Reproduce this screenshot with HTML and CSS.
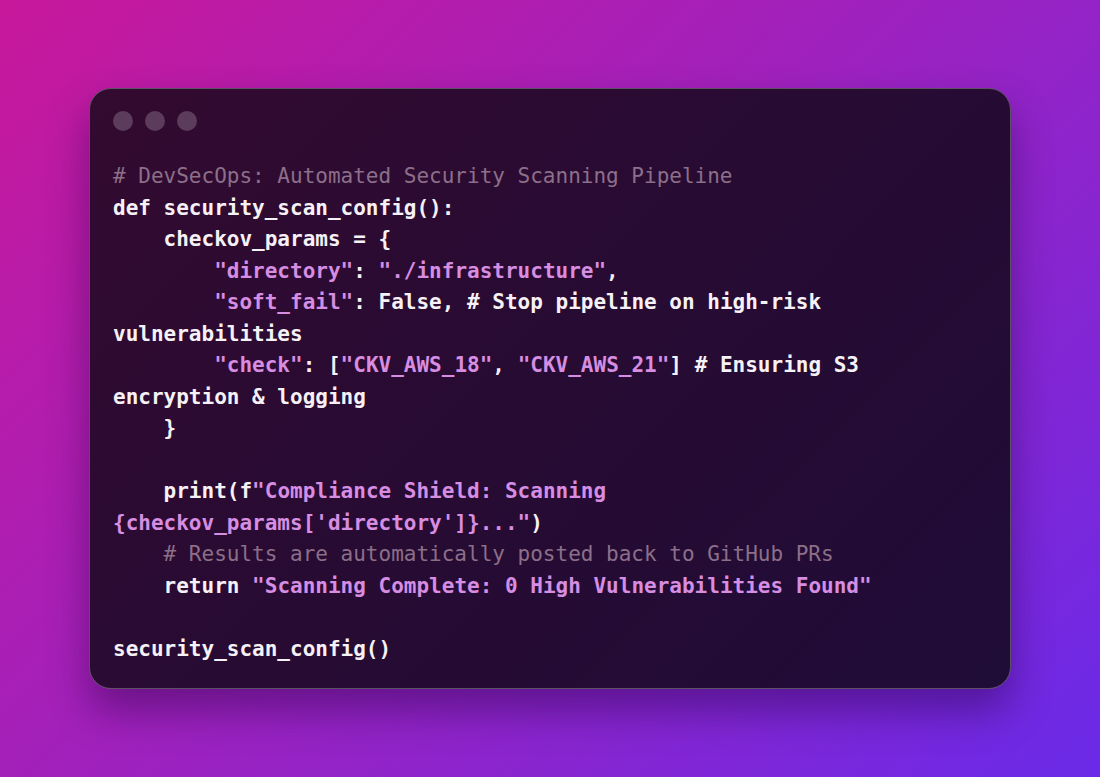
FILE: index.html
```html
<!DOCTYPE html>
<html lang="en">
<head>
    <meta charset="UTF-8">
    <title>security_scan_config</title>
    <link rel="stylesheet" href="styles.css">
</head>
<body>
    <div class="stage">
        <div class="window">
            <div class="dots">
                <span class="dot"></span>
                <span class="dot"></span>
                <span class="dot"></span>
            </div>
<pre class="code"><span class="cm"># DevSecOps: Automated Security Scanning Pipeline</span>
def security_scan_config():
    checkov_params = {
        <span class="str">"directory"</span>: <span class="str">"./infrastructure"</span>,
        <span class="str">"soft_fail"</span>: False, # Stop pipeline on high-risk vulnerabilities
        <span class="str">"check"</span>: [<span class="str">"CKV_AWS_18"</span>, <span class="str">"CKV_AWS_21"</span>] # Ensuring S3 encryption &amp; logging
    }

    print(f<span class="str">"Compliance Shield: Scanning {checkov_params['directory']}..."</span>)
    <span class="cm"># Results are automatically posted back to GitHub PRs</span>
    return <span class="str">"Scanning Complete: 0 High Vulnerabilities Found"</span>

security_scan_config()</pre>
        </div>
    </div>
</body>
</html>
```

FILE: styles.css
```css
html, body {
    margin: 0;
    height: 100%;
}
body {
    background: linear-gradient(135deg, #c8189b 0%, #9c22c0 50%, #6a2ae8 100%);
    font-family: "DejaVu Sans Mono", "Liberation Mono", monospace;
}
.stage {
    display: flex;
    justify-content: center;
    padding-top: 88px;
}
.window {
    width: 922px;
    box-sizing: border-box;
    padding: 22px 23px 23px;
    border: 1.5px solid #5c5063;
    border-radius: 22px;
    background: linear-gradient(135deg, #330a30 0%, #270b33 50%, #1f0c37 100%);
    box-shadow: 0 22px 40px rgba(40, 0, 70, 0.45);
}
.dots {
    display: flex;
    gap: 12px;
    margin-bottom: 30px;
}
.dot {
    width: 20px;
    height: 20px;
    border-radius: 50%;
    background: #5b3c5d;
}
.code {
    margin: 0;
    font-family: "DejaVu Sans Mono", "Liberation Mono", monospace;
    font-size: 21px;
    line-height: 31.5px;
    font-weight: bold;
    color: #f6f1f6;
    white-space: pre-wrap;
}
.str {
    color: #d68de2;
}
.cm {
    color: #8c6f89;
    font-weight: normal;
}
```
